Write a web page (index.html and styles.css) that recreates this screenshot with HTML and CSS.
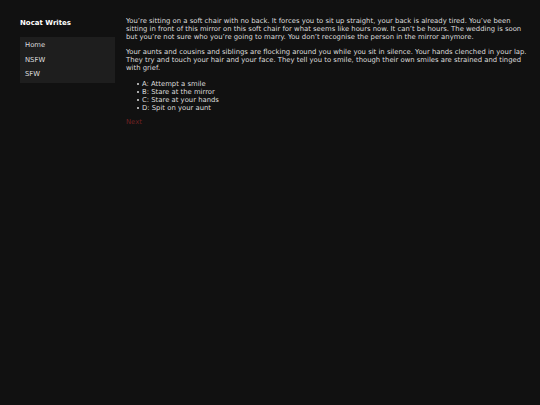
FILE: index.html
```html
<!DOCTYPE html>
<html>
<head>
<meta charset="utf-8">
<link rel="stylesheet" href="styles.css">
</head>
<body>
<div class="page">
  <aside class="sidebar">
    <h1 class="site-title">Nocat Writes</h1>
    <nav class="nav">
      <a class="nav-item" href="#">Home</a>
      <a class="nav-item" href="#">NSFW</a>
      <a class="nav-item" href="#">SFW</a>
    </nav>
  </aside>
  <main class="content">
    <p>You’re sitting on a soft chair with no back. It forces you to sit up straight, your back is already tired. You’ve been sitting in front of this mirror on this soft chair for what seems like hours now. It can’t be hours. The wedding is soon but you’re not sure who you’re going to marry. You don’t recognise the person in the mirror anymore.</p>
    <p>Your aunts and cousins and siblings are flocking around you while you sit in silence. Your hands clenched in your lap. They try and touch your hair and your face. They tell you to smile, though their own smiles are strained and tinged with grief.</p>
    <ul class="choices">
      <li>A: Attempt a smile</li>
      <li>B: Stare at the mirror</li>
      <li>C: Stare at your hands</li>
      <li>D: Spit on your aunt</li>
    </ul>
    <a class="next" href="#">Next</a>
  </main>
</div>
</body>
</html>
```
FILE: styles.css
```css
html, body {
  margin: 0;
  padding: 0;
  background: #111111;
  height: 100%;
}
body {
  font-family: "DejaVu Sans", Verdana, sans-serif;
  font-size: 6.85px;
  line-height: 8px;
  color: #dddddd;
}
.page {
  display: flex;
  align-items: flex-start;
  gap: 11px;
  padding: 17px 9px 20px 20px;
}
.sidebar {
  width: 95px;
  flex-shrink: 0;
}
.site-title {
  font-size: 7px;
  font-weight: bold;
  line-height: 8px;
  margin: 2px 0 10px 0;
  color: #ffffff;
}
.nav {
  display: flex;
  flex-direction: column;
  background: #1e1e1e;
  padding: 1px 0;
}
.nav-item {
  display: block;
  padding: 3px 5px;
  line-height: 8.5px;
  color: #dddddd;
  text-decoration: none;
}
.content {
  flex: 1;
}
.content p {
  margin: 0 0 7px 0;
}
.choices {
  list-style: none;
  margin: 8px 0 6px 0;
  padding-left: 16px;
}
.choices li::before {
  content: "";
  display: inline-block;
  width: 2px;
  height: 2px;
  border-radius: 50%;
  background: #dddddd;
  margin-left: -5px;
  margin-right: 3px;
  vertical-align: 1.5px;
}
.next {
  color: #702222;
  text-decoration: none;
}
```
